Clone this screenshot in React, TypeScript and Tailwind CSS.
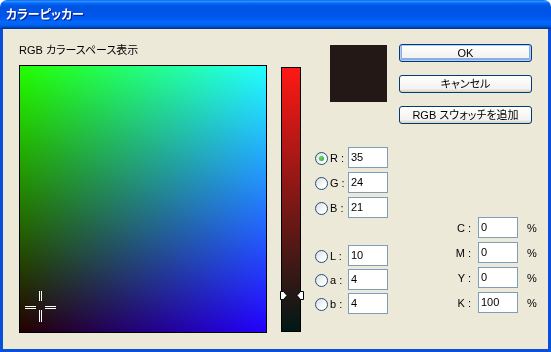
/**
 * XP-style "カラーピッカー" dialog.
 */

interface FieldProps {
  value: string;
}

function Field({ value }: FieldProps) {
  return (
    <div className="w-[40px] h-[21px] border border-[#7F9DB9] bg-white px-[2px] text-[11px] leading-[19px] text-black">
      {value}
    </div>
  );
}

function Radio({ checked = false }: { checked?: boolean }) {
  return (
    <span className="mt-[5px] w-[13px] h-[13px] shrink-0 rounded-full border border-[#1C5180] bg-[linear-gradient(135deg,#DCDCD7,#FFFFFF_75%)] flex items-center justify-center">
      {checked && (
        <span className="w-[5px] h-[5px] rounded-full bg-[radial-gradient(circle_at_40%_40%,#6BD56B,#21A121)]" />
      )}
    </span>
  );
}

function ChannelRow({ label, value, checked }: { label: string; value: string; checked?: boolean }) {
  return (
    <div className="flex items-start h-[21px]">
      <Radio checked={checked} />
      <span className="w-[20px] pl-[2px] mt-[1px] text-[11px] leading-[21px] whitespace-pre">{label}</span>
      <Field value={value} />
    </div>
  );
}

function CmykRow({ label, value }: { label: string; value: string }) {
  return (
    <div className="flex items-center h-[21px]">
      <span className="w-[24px] text-right text-[11px] leading-[21px] mt-[1px] whitespace-pre">{label}</span>
      <div className="ml-[4px]">
        <Field value={value} />
      </div>
      <span className="ml-[9px] text-[11px] mt-[1px]">%</span>
    </div>
  );
}

function XpButton({ label, isDefault = false }: { label: string; isDefault?: boolean }) {
  return (
    <button
      type="button"
      className={
        isDefault
          ? 'w-[133px] h-[18px] rounded-[3px] border border-[#003C74] bg-[linear-gradient(to_bottom,#FFFFFF,#F3F2EE_80%,#DCD8CE)] shadow-[inset_0_0_0_1px_#B5CDF6,inset_0_-1px_0_2px_#8AAEEB] text-[11px] leading-[16px] text-black flex items-center justify-center'
          : 'w-[133px] h-[18px] rounded-[3px] border border-[#003C74] bg-[linear-gradient(to_bottom,#FFFFFF,#F3F2EE_80%,#D6D0C5)] text-[11px] leading-[16px] text-black flex items-center justify-center'
      }
    >
      {label}
    </button>
  );
}

function Crosshair() {
  return (
    <svg className="absolute left-[4px] top-[225px]" width="33" height="33" viewBox="0 0 33 33">
      <g fill="#FFFFFF">
        <rect x="15" y="0" width="1" height="10" />
        <rect x="17" y="0" width="1" height="10" />
        <rect x="15" y="19" width="1" height="12" />
        <rect x="17" y="19" width="1" height="12" />
        <rect x="1" y="15" width="11" height="1" />
        <rect x="1" y="17" width="11" height="1" />
        <rect x="21" y="15" width="11" height="1" />
        <rect x="21" y="17" width="11" height="1" />
      </g>
    </svg>
  );
}

function SliderMarkers() {
  return (
    <>
      <svg className="absolute left-[-2px] top-[223px]" width="8" height="9" viewBox="0 0 8 9">
        <path d="M0.5 0.5 H3.5 L7 4.5 L3.5 8.5 H0.5 Z" fill="#FFFFFF" stroke="#000000" />
      </svg>
      <svg className="absolute left-[14px] top-[223px]" width="8" height="9" viewBox="0 0 8 9">
        <path d="M7.5 0.5 H4.5 L1 4.5 L4.5 8.5 H7.5 Z" fill="#FFFFFF" stroke="#000000" />
      </svg>
    </>
  );
}

export default function App() {
  return (
    <div className="w-[551px] h-[352px] bg-white flex flex-col text-black [font-family:'Liberation_Sans','Noto_Sans_CJK_JP',sans-serif] [font-feature-settings:'palt']">
      {/* title bar */}
      <div className="h-[29px] shrink-0 rounded-t-[7px] bg-[linear-gradient(to_bottom,#0058EE_0%,#3593FF_4%,#288EFF_6%,#127DFF_8%,#036FFC_10%,#0262EE_14%,#0057E5_20%,#0054E3_24%,#0055EB_56%,#005BF5_66%,#026AFE_76%,#0062EF_86%,#0052D6_92%,#0040AB_96%,#003092_100%)] flex items-center pl-[6px]">
        <span className="text-white font-bold text-[12px] leading-[14px] [text-shadow:1px_1px_#0A1883]">
          カラーピッカー
        </span>
      </div>

      {/* body */}
      <div className="flex-1 flex bg-[#ECE9D8] border-x-[3px] border-b-[3px] border-[#0A4FDC]">
        {/* color field */}
        <div className="pl-[16px] pt-[14px] flex flex-col">
          <div className="h-[14px] text-[11px] leading-[14px] mb-[8px]">RGB カラースペース表示</div>
          <div className="relative w-[248px] h-[268px] border border-black bg-[linear-gradient(to_right,rgb(35,0,0),rgb(35,0,255))]">
            <div className="absolute inset-0 bg-[linear-gradient(to_bottom,rgb(0,255,0),rgb(0,0,0))] mix-blend-screen" />
            <Crosshair />
          </div>
        </div>

        {/* red slider */}
        <div className="relative ml-[14px] mt-[38px] w-[20px] h-[265px] border border-black bg-[linear-gradient(to_bottom,rgb(255,24,21),rgb(0,24,21))]">
          <SliderMarkers />
        </div>

        {/* controls */}
        <div className="flex flex-col">
          <div className="flex items-start mt-[15px]">
            <div className="ml-[29px] mt-[1px] w-[57px] h-[57px] bg-[#231815]" />
            <div className="ml-[12px] flex flex-col gap-[13px]">
              <XpButton label="OK" isDefault />
              <XpButton label="キャンセル" />
              <XpButton label="RGB スウォッチを追加" />
            </div>
          </div>

          <div className="flex items-end mt-[23px]">
            <div className="ml-[14px] flex flex-col">
              <div className="flex flex-col gap-[4px]">
                <ChannelRow label="R : " value="35" checked />
                <ChannelRow label="G : " value="24" />
                <ChannelRow label="B : " value="21" />
              </div>
              <div className="mt-[27px] flex flex-col gap-[3px]">
                <ChannelRow label="L : " value="10" />
                <ChannelRow label="a : " value="4" />
                <ChannelRow label="b : " value="4" />
              </div>
            </div>
            <div className="ml-[62px] mb-[1px] flex flex-col gap-[4px]">
              <CmykRow label="C : " value="0" />
              <CmykRow label="M : " value="0" />
              <CmykRow label="Y : " value="0" />
              <CmykRow label="K : " value="100" />
            </div>
          </div>
        </div>
      </div>
    </div>
  );
}
